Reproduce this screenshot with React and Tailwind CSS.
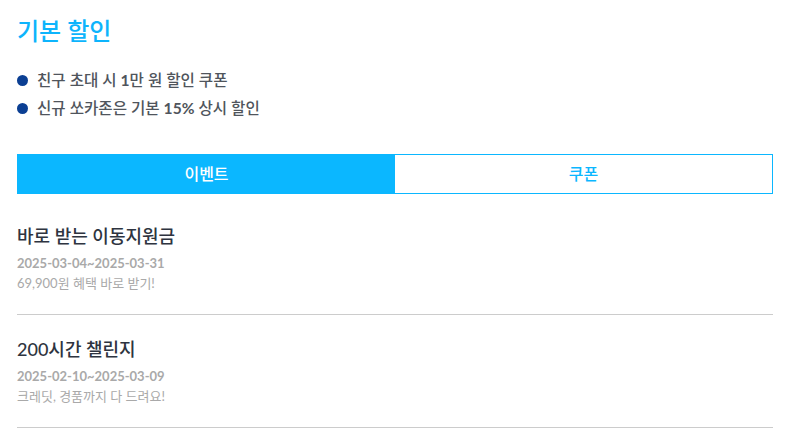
export default function App() {
  const items = [
    { title: "바로 받는 이동지원금", date: "2025-03-04~2025-03-31", desc: "69,900원 혜택 바로 받기!" },
    { title: "200시간 챌린지", date: "2025-02-10~2025-03-09", desc: "크레딧, 경품까지 다 드려요!" },
  ];
  return (
    <div className="w-[786px] h-[435px] bg-white pl-[17px] pr-[13px] pt-[14px] overflow-hidden" style={{ fontFamily: 'Lato, "Noto Sans CJK KR", sans-serif' }}>
      <h1 className="text-[24px] leading-[34px] font-medium text-[#0db4fc]">기본 할인</h1>
      <ul className="mt-[21px] flex flex-col gap-[6px]">
        <li className="flex items-center gap-[9px] text-[15.6px] leading-[22px] font-medium text-[#50555c]">
          <span className="w-[11px] h-[11px] rounded-full bg-[#0b3f93]" />
          <span>친구 초대 시 <b className="font-bold">1</b>만 원 할인 쿠폰</span>
        </li>
        <li className="flex items-center gap-[9px] text-[15.6px] leading-[22px] font-medium text-[#50555c]">
          <span className="w-[11px] h-[11px] rounded-full bg-[#0b3f93]" />
          <span>신규 쏘카존은 기본 <b className="font-bold">15%</b> 상시 할인</span>
        </li>
      </ul>
      <div className="mt-[35px] flex h-[40px] border border-[#0bb7ff]">
        <div className="flex-1 bg-[#0bb7ff] text-white flex items-center justify-center text-[16px] font-medium">이벤트</div>
        <div className="flex-1 bg-white text-[#0bb7ff] flex items-center justify-center text-[16px] font-medium">쿠폰</div>
      </div>
      <div className="mt-[28px]">
        {items.map((it, i) => (
          <div key={i} className={`border-b border-[#cccccc] pb-[21px] ${i > 0 ? "pt-[20px]" : ""}`}>
            <div className="text-[18px] leading-[28px] font-medium text-[#2e3440]">{it.title}</div>
            <div className="mt-[3px] text-[13px] leading-[20px] font-bold text-[#a9a9a9]">{it.date}</div>
            <div className="text-[13px] leading-[20px] text-[#a9a9a9]">{it.desc}</div>
          </div>
        ))}
      </div>
    </div>
  );
}
